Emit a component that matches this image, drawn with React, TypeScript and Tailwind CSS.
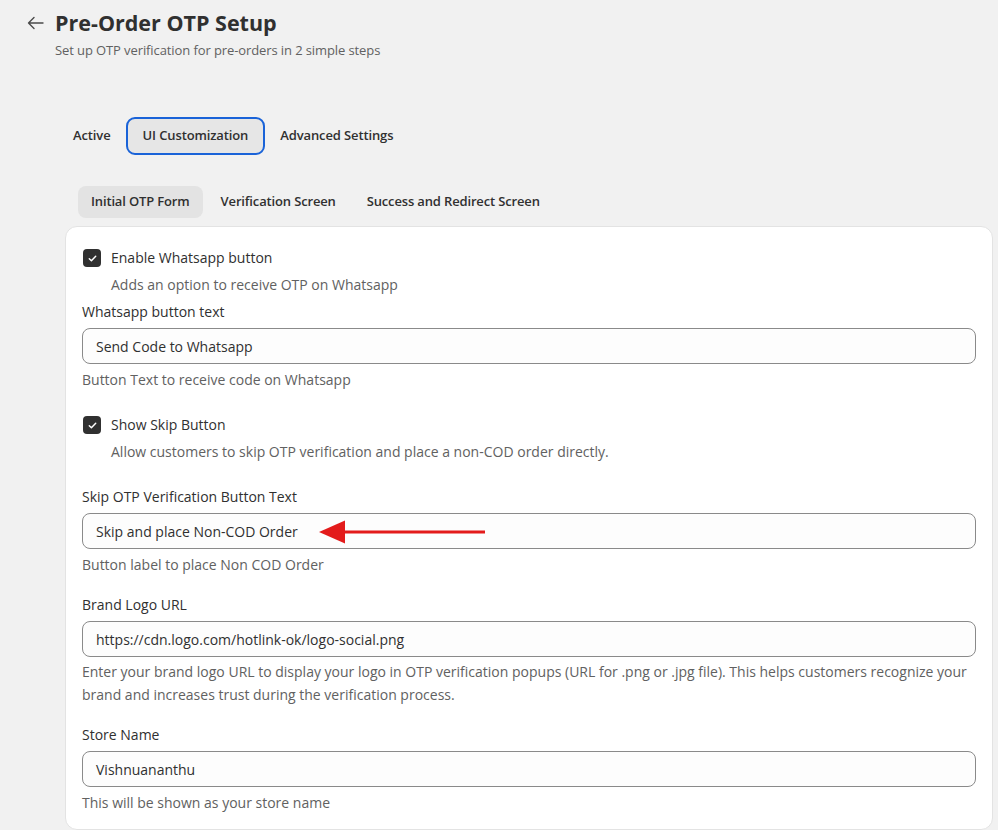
import React from "react";

function Check() {
  return (
    <span className="ml-[1px] mt-[1px] flex h-[18px] w-[18px] shrink-0 items-center justify-center rounded-[4px] bg-[#303030]">
      <svg viewBox="0 0 12 12" className="h-[11px] w-[11px]" fill="none">
        <path d="M2.5 6.3 4.8 8.5 9.5 3.6" stroke="#fff" strokeWidth="1.6" strokeLinecap="round" strokeLinejoin="round" />
      </svg>
    </span>
  );
}

function Field({
  label,
  value,
  help,
  multiline,
  children,
}: {
  label: string;
  value: string;
  help: React.ReactNode;
  multiline?: boolean;
  children?: React.ReactNode;
}) {
  return (
    <div className="flex flex-col">
      <label className="text-[14px] leading-[20px] text-[#303030]">{label}</label>
      <div className="relative mt-[6px]">
        <div className="flex h-[36px] items-center rounded-[8px] border border-[#8a8a8a] bg-[#fdfdfd] px-[13px] text-[14px] text-[#303030]">
          {value}
        </div>
        {children}
      </div>
      <p className={multiline ? "mt-[3px] text-[14px] leading-[23px] text-[#616161]" : "mt-[6px] text-[14px] leading-[20px] text-[#616161]"}>{help}</p>
    </div>
  );
}

export default function App() {
  return (
    <div className="min-h-[830px] bg-[#f1f1f1] font-['Open_Sans',sans-serif] text-[#303030]">
      <div className="flex items-start gap-[11px] pl-[27px] pt-[8px]">
        <svg className="mt-[8px] shrink-0" width="17" height="14" viewBox="0 0 17 14" fill="none">
          <path d="M16 7H1.5M7 1.5 1.5 7 7 12.5" stroke="#4a4a4a" strokeWidth="1.4" strokeLinecap="round" strokeLinejoin="round" />
        </svg>
        <div>
          <h1 className="text-[21.5px] font-bold leading-[30px] text-[#303030]">Pre-Order OTP Setup</h1>
          <p className="mt-[3px] text-[13px] leading-[18px] tracking-[-0.1px] text-[#616161]">Set up OTP verification for pre-orders in 2 simple steps</p>
        </div>
      </div>

      <div className="ml-[65px] mt-[58px] flex items-center gap-[7px] text-[13px] font-semibold tracking-[-0.12px] text-[#303030]">
        <button className="px-[8px] py-[8px]">Active</button>
        <button className="h-[38px] rounded-[9px] border-2 border-[#1a63d8] bg-[#e6e6e6] px-[15px]">UI Customization</button>
        <button className="px-[8px] py-[8px]">Advanced Settings</button>
      </div>

      <div className="ml-[78px] mt-[31px] flex items-center gap-[5px] text-[13px] font-semibold tracking-[-0.15px] text-[#303030]">
        <button className="h-[32px] rounded-[8px] bg-[#e3e3e3] px-[13px]">Initial OTP Form</button>
        <button className="h-[32px] px-[13px]">Verification Screen</button>
        <button className="h-[32px] px-[13px]">Success and Redirect Screen</button>
      </div>

      <div className="ml-[65px] mr-[5px] mt-[8px] rounded-[12px] border border-[#e3e3e3] bg-white px-[16px] pb-[16px] pt-[21px]">
        <div className="flex items-start gap-[10px]">
          <Check />
          <div>
            <p className="text-[14px] leading-[20px]">Enable Whatsapp button</p>
            <p className="mt-[7px] text-[14px] leading-[20px] text-[#616161]">Adds an option to receive OTP on Whatsapp</p>
          </div>
        </div>
        <div className="mt-[7px]">
          <Field label="Whatsapp button text" value="Send Code to Whatsapp" help="Button Text to receive code on Whatsapp" />
        </div>

        <div className="mt-[25px] flex items-start gap-[10px]">
          <Check />
          <div>
            <p className="text-[14px] leading-[20px]">Show Skip Button</p>
            <p className="mt-[7px] text-[14px] leading-[20px] text-[#616161]">Allow customers to skip OTP verification and place a non-COD order directly.</p>
          </div>
        </div>

        <div className="mt-[25px]">
          <Field label="Skip OTP Verification Button Text" value="Skip and place Non-COD Order" help="Button label to place Non COD Order">
            <svg className="absolute left-[237px] top-[7px]" width="168" height="24" viewBox="0 0 168 24">
              <path d="M22 12 H166" stroke="#e31b1b" strokeWidth="3" />
              <path d="M0 12 L26 0.5 L26 23.5 Z" fill="#e31b1b" />
            </svg>
          </Field>
        </div>

        <div className="mt-[20px]">
          <Field
            label="Brand Logo URL"
            value="https://cdn.logo.com/hotlink-ok/logo-social.png"
            multiline
            help="Enter your brand logo URL to display your logo in OTP verification popups (URL for .png or .jpg file). This helps customers recognize your brand and increases trust during the verification process."
          />
        </div>

        <div className="mt-[19px]">
          <Field label="Store Name" value="Vishnuananthu" help="This will be shown as your store name" />
        </div>
      </div>
    </div>
  );
}
